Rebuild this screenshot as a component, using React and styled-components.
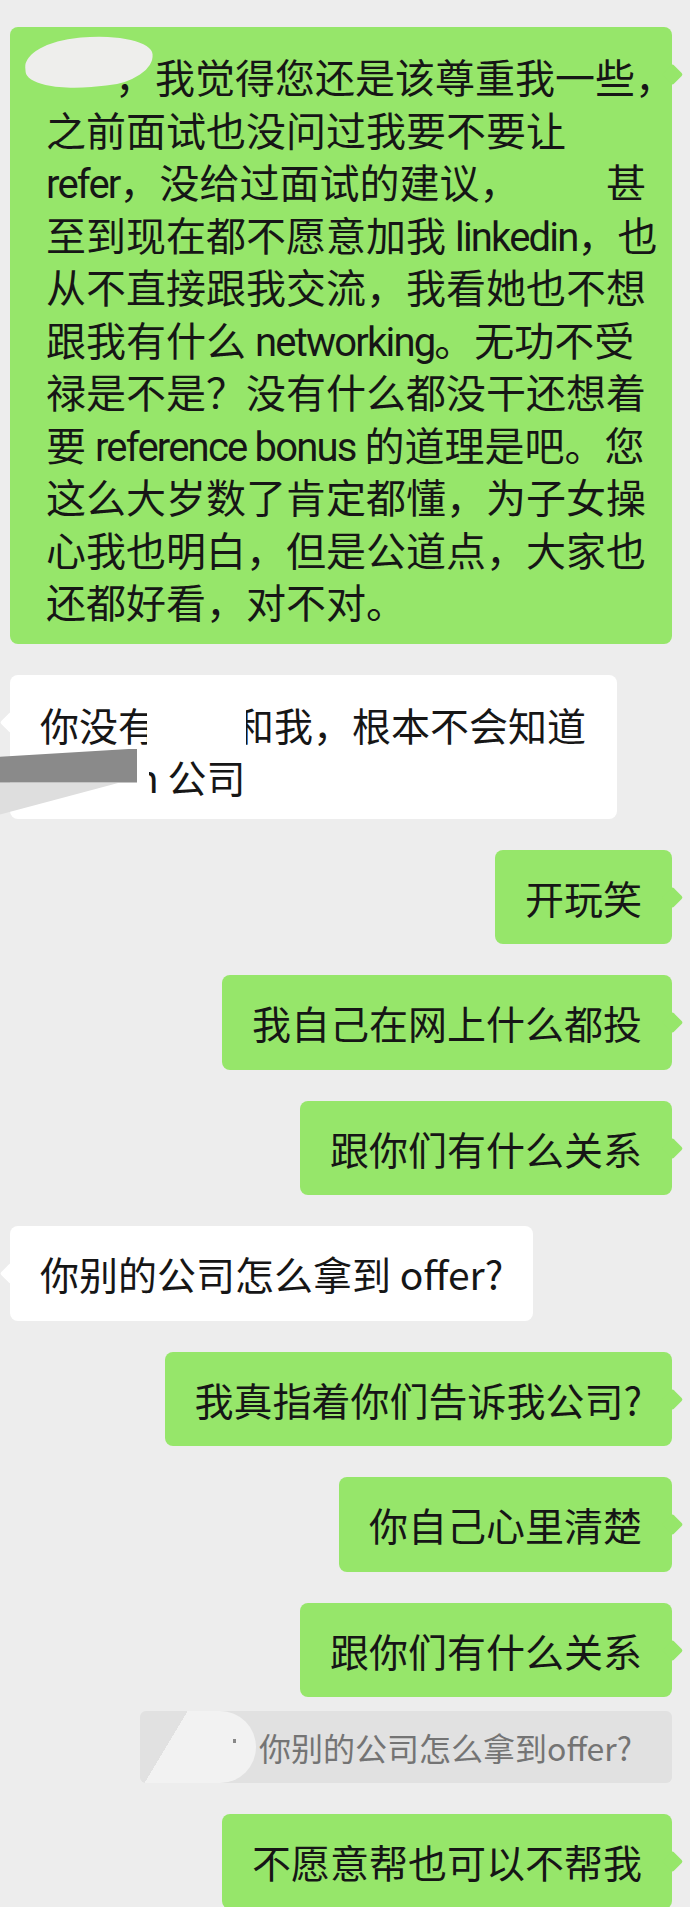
import styled, { createGlobalStyle } from 'styled-components';

const GlobalStyle = createGlobalStyle`
  html, body {
    margin: 0;
    padding: 0;
    background: #ededed;
  }
  body {
    font-family: "Noto Sans CJK SC", "Noto Sans", sans-serif;
  }
`;

const Page = styled.div`
  width: 690px;
  height: 1907px;
  overflow: hidden;
  box-sizing: border-box;
  padding-top: 27px;
  background: #ededed;
  display: flex;
  flex-direction: column;
  gap: 31px;
`;

const Row = styled.div`
  display: flex;
  justify-content: ${p => (p.$side === 'left' ? 'flex-start' : 'flex-end')};
  padding: ${p => (p.$side === 'left' ? '0 0 0 10px' : '0 18px 0 0')};
  margin-top: ${p => (p.$pull ? '-17px' : '0')};
`;

const Bubble = styled.div`
  position: relative;
  box-sizing: border-box;
  width: ${p => p.$width || 'auto'};
  padding: ${p => p.$pad || '21px 30px'};
  background: ${p => (p.$mine ? '#96e66a' : '#ffffff')};
  border-radius: 8px;
  color: #161616;
  font-size: ${p => p.$size || '39px'};
  line-height: 52.5px;
  white-space: nowrap;

  /* 小尖角 */
  &::after {
    content: '';
    position: absolute;
    top: 40px;
    ${p => (p.$mine ? 'right: -7.5px;' : 'left: -7.5px;')}
    width: 15px;
    height: 15px;
    background: inherit;
    border-radius: 2px;
    transform: rotate(45deg);
  }
`;

const Line = styled.div`
  display: ${p => (p.$spread ? 'flex' : 'block')};
  justify-content: space-between;
  height: 52.5px;
`;

const Latin = styled.span`
  font-family: Roboto, "Noto Sans CJK SC", sans-serif;
  letter-spacing: -1.8px;
`;

const Gap = styled.span`
  display: inline-block;
  width: ${p => p.$w};
`;

/* 打码的部分 */
const NameSmudge = styled.div`
  position: absolute;
  left: 15px;
  top: 10px;
  width: 128px;
  height: 50px;
  background: #eeeeec;
  border-radius: 48% 60% 42% 55% / 55% 50% 60% 45%;
  transform: rotate(-5deg);
  z-index: 1;
`;

const WhiteOut = styled.div`
  position: absolute;
  left: ${p => p.$left};
  top: ${p => p.$top};
  width: ${p => p.$w};
  height: ${p => p.$h};
  background: #ffffff;
`;

const GreyBar = styled.div`
  position: absolute;
  left: -10px;
  top: 74px;
  width: 137px;
  height: 34px;
  background: #8a8a8a;
  clip-path: polygon(0 24%, 100% 0, 100% 100%, 0 100%);
`;

const GreyShade = styled.div`
  position: absolute;
  left: -10px;
  top: 108px;
  width: 120px;
  height: 32px;
  background: #dedede;
  clip-path: polygon(0 0, 100% 0, 0 100%);
`;

const QuoteBox = styled.div`
  position: relative;
  box-sizing: border-box;
  width: 532px;
  height: 72px;
  padding-left: 119px;
  background: #e1e1e1;
  border-radius: 6px;
  color: #747474;
  font-size: 32px;
  line-height: 72px;
  white-space: nowrap;
`;

const QuoteSmudge = styled.div`
  position: absolute;
  left: 0;
  top: 0;
  bottom: 0;
  width: 116px;
  background: linear-gradient(121deg, transparent 0 30%, #f2f2f2 30%);
  border-radius: 0 36px 36px 0;
`;

const Dot = styled.div`
  position: absolute;
  left: 93px;
  top: 28px;
  width: 3px;
  height: 4px;
  background: #888;
`;

const singles = [
  { text: '开玩笑', mine: true },
  { text: '我自己在网上什么都投', mine: true },
  { text: '跟你们有什么关系', mine: true },
  { text: '你别的公司怎么拿到 offer?', mine: false },
  { text: '我真指着你们告诉我公司?', mine: true },
  { text: '你自己心里清楚', mine: true },
  { text: '跟你们有什么关系', mine: true },
];

const Msg = ({ text, mine }) => (
  <Row $side={mine ? 'right' : 'left'}>
    <Bubble $mine={mine}>
      <Line>{text}</Line>
    </Bubble>
  </Row>
);

export default function App() {
  return (
    <>
      <GlobalStyle />
      <Page>
        <Row $side="right">
          <Bubble $mine $width="662px" $size="40px" $pad="23px 26px 16px 36px">
            <NameSmudge />
            <Line><Gap $w="69px" />，我觉得您还是该尊重我一些，</Line>
            <Line>之前面试也没问过我要不要让</Line>
            <Line $spread><span><Latin>refer</Latin>，没给过面试的建议，</span><span>甚</span></Line>
            <Line>至到现在都不愿意加我 <Latin>linkedin</Latin>，也</Line>
            <Line>从不直接跟我交流，我看她也不想</Line>
            <Line>跟我有什么 <Latin>networking</Latin>。无功不受</Line>
            <Line>禄是不是？没有什么都没干还想着</Line>
            <Line>要 <Latin>reference bonus</Latin> 的道理是吧。您</Line>
            <Line>这么大岁数了肯定都懂，为子女操</Line>
            <Line>心我也明白，但是公道点，大家也</Line>
            <Line>还都好看，对不对。</Line>
          </Bubble>
        </Row>

        <Row $side="left">
          <Bubble $width="607px" $pad="23px 30px 16px">
            <Line>你没有<Gap $w="78px" />和我，根本不会知道</Line>
            <Line><Gap $w="95px" />n 公司</Line>
            <WhiteOut $left="137px" $top="22px" $w="99px" $h="50px" />
            <WhiteOut $left="127px" $top="74px" $w="12px" $h="46px" />
            <WhiteOut $left="127px" $top="74px" $w="22px" $h="23px" />
            <GreyBar />
            <GreyShade />
          </Bubble>
        </Row>

        {singles.map((m, i) => (
          <Msg key={i} text={m.text} mine={m.mine} />
        ))}

        {/* 引用 */}
        <Row $side="right" $pull>
          <QuoteBox>
            <QuoteSmudge />
            <Dot />
            你别的公司怎么拿到offer?
          </QuoteBox>
        </Row>

        <Msg text="不愿意帮也可以不帮我" mine />
      </Page>
    </>
  );
}
